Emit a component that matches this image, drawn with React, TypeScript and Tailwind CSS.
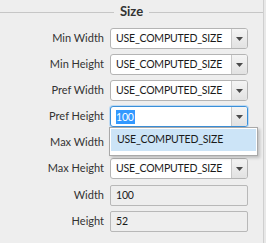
import React from "react";

const FONT = { fontFamily: "Lato, 'Liberation Sans', sans-serif" };

function Arrow() {
  return (
    <svg width="7" height="4" viewBox="0 0 7 4" className="block">
      <path d="M0 0 H7 L3.5 4 Z" fill="#4a4a4a" />
    </svg>
  );
}

function Combo({ value, focused }: { value: string; focused?: boolean }) {
  return (
    <div
      className={
        "flex h-[21px] w-[138px] rounded-[3px] border bg-white " +
        (focused
          ? "border-[#3a8fd8] shadow-[0_0_0_1px_#bcd9f3]"
          : "border-[#b4b4b4]")
      }
    >
      <div className="flex flex-1 items-center pl-[5px] text-[10.5px] tracking-[-0.2px] text-[#1a1a1a]">
        {focused ? (
          <span className="bg-[#3399ff] pr-[1px] leading-[14px] text-white">
            {value}
          </span>
        ) : (
          value
        )}
      </div>
      <div className="flex w-[16px] items-center justify-center rounded-r-[2px] border-l border-[#c8c8c8] bg-gradient-to-b from-[#f4f4f4] to-[#e2e2e2]">
        <Arrow />
      </div>
    </div>
  );
}

function Field({ value }: { value: string }) {
  return (
    <div className="flex h-[21px] w-[138px] items-center rounded-[2px] border border-[#b8b8b8] bg-[#eeeeee] pl-[5px] text-[10.5px] tracking-[-0.2px] text-[#1a1a1a]">
      {value}
    </div>
  );
}

function Row({ label, children }: { label: string; children: React.ReactNode }) {
  return (
    <div className="flex h-[21px] items-center">
      <div className="w-[104px] text-right text-[11px] text-[#333333]">
        {label}
      </div>
      <div className="ml-[6px]">{children}</div>
    </div>
  );
}

export default function App() {
  return (
    <div className="flex h-[243px] w-[266px] overflow-hidden bg-[#eeeeee]" style={FONT}>
      <div className="relative w-[263px]">
        <div className="flex h-[24px] items-center">
          <div className="h-px flex-1 bg-[#c6c6c6]" />
          <div className="px-[6px] text-[13px] font-bold text-[#333333]">Size</div>
          <div className="h-px flex-1 bg-[#c6c6c6]" />
        </div>

        <div className="mt-[4px] flex flex-col gap-[5px]">
          <Row label="Min Width">
            <Combo value="USE_COMPUTED_SIZE" />
          </Row>
          <Row label="Min Height">
            <Combo value="USE_COMPUTED_SIZE" />
          </Row>
          <Row label="Pref Width">
            <Combo value="USE_COMPUTED_SIZE" />
          </Row>
          <Row label="Pref Height">
            <Combo value="100" focused />
          </Row>
          <Row label="Max Width">
            <Combo value="USE_COMPUTED_SIZE" />
          </Row>
          <Row label="Max Height">
            <Combo value="USE_COMPUTED_SIZE" />
          </Row>
          <div className="mt-[1px]">
            <Row label="Width">
              <Field value="100" />
            </Row>
          </div>
          <Row label="Height">
            <Field value="52" />
          </Row>
        </div>

        {/* open dropdown list */}
        <div className="absolute left-[109px] top-[127px] w-[149px] border border-[#a9a9a9] bg-white p-[1px] pb-[4px] shadow-[2px_2px_3px_rgba(0,0,0,0.2)]">
          <div className="flex h-[22px] items-center bg-[#cce4f7] pl-[6px] text-[10.5px] tracking-[-0.2px] text-[#1a1a1a]">
            USE_COMPUTED_SIZE
          </div>
        </div>
      </div>
      <div className="w-px bg-[#cfcfcf]" />
      <div className="flex-1 bg-[#e8e8e8]" />
    </div>
  );
}
